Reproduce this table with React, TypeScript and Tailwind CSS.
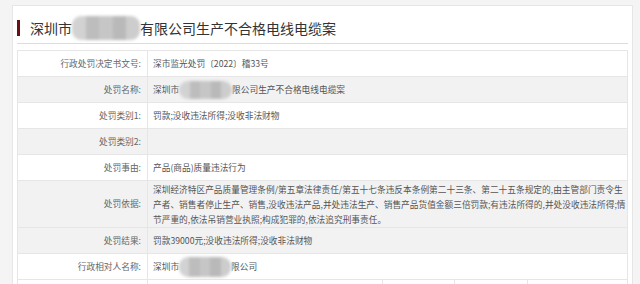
import React from "react";

function Blur({ w, h }: { w: number; h: number }) {
  return (
    <span
      className="inline-flex align-middle overflow-hidden rounded-[9px] blur-[1.5px]"
      style={{ width: w, height: h }}
    >
      <span className="flex-1 bg-[#d2d2d2]" />
      <span className="flex-1 bg-[#bdbdbd]" />
      <span className="flex-1 bg-[#c6c6c6]" />
      <span className="flex-1 bg-[#b9b9b9]" />
      <span className="flex-1 bg-[#cdcdcd]" />
    </span>
  );
}

type Row = { label: string; value: React.ReactNode; gray?: boolean; h?: string };

export default function App() {
  const rows: Row[] = [
    { label: "行政处罚决定书文号:", value: "深市监光处罚〔2022〕稽33号" },
    {
      label: "处罚名称:",
      gray: true,
      value: (
        <>
          深圳市
          <Blur w={53} h={18} />
          限公司生产不合格电线电缆案
        </>
      ),
    },
    { label: "处罚类别1:", value: "罚款;没收违法所得;没收非法财物" },
    { label: "处罚类别2:", value: "", gray: true },
    { label: "处罚事由:", value: "产品(商品)质量违法行为" },
    {
      label: "处罚依据:",
      gray: true,
      h: "h-[47px]",
      value: (
        <span className="block leading-[15px]">
          深圳经济特区产品质量管理条例/第五章法律责任/第五十七条违反本条例第二十三条、第二十五条规定的,由主管部门责令生
          <br />
          产者、销售者停止生产、销售,没收违法产品,并处违法生产、销售产品货值金额三倍罚款;有违法所得的,并处没收违法所得;情
          <br />
          节严重的,依法吊销营业执照;构成犯罪的,依法追究刑事责任。
        </span>
      ),
    },
    { label: "处罚结果:", gray: true, value: "罚款39000元;没收违法所得;没收非法财物" },
    {
      label: "行政相对人名称:",
      value: (
        <>
          深圳市
          <Blur w={52} h={20} />
          限公司
        </>
      ),
    },
  ];

  return (
    <div
      className="w-[640px] h-[284px] overflow-hidden bg-[#f4f4f4] pt-[5px] pl-[12px]"
      style={{ fontFamily: '"Noto Sans CJK SC", "Noto Sans", sans-serif' }}
    >
      <div className="w-[621px] h-[300px] bg-white border border-[#e6e6e6] px-[4px]">
        <div className="pt-[14px] pb-[7px] border-b border-[#dcdcdc] flex items-center h-[38px]">
          <div className="w-[3px] h-[16px] bg-[#6b1010]" />
          <div className="ml-[10px] h-[16px] text-[14px] leading-[16px] text-[#333] whitespace-nowrap flex items-center">
            深圳市
            <Blur w={68} h={24} />
            有限公司生产不合格电线电缆案
          </div>
        </div>

        <div className="mt-[6px] border-t border-l border-[#e6e6e6] text-[8.7px] text-[#555]">
          {rows.map((r) => (
            <div
              key={r.label}
              className={`flex border-b border-[#e6e6e6] ${r.h ?? "h-[26px]"} ${r.gray ? "bg-[#f2f2f2]" : "bg-white"}`}
            >
              <div className="w-[130px] shrink-0 border-r border-[#e6e6e6] flex items-center justify-end pr-[6px] text-[#666] whitespace-nowrap">
                {r.label}
              </div>
              <div className="flex-1 border-r border-[#e6e6e6] flex items-center pl-[5px] whitespace-nowrap">
                {r.value}
              </div>
            </div>
          ))}
          <div className="flex h-[26px] border-b border-[#e6e6e6] bg-white">
            <div className="w-[130px] border-r border-[#e6e6e6]" />
            <div className="w-[235px] border-r border-[#e6e6e6]" />
            <div className="w-[72px] border-r border-[#e6e6e6]" />
            <div className="w-[73px] border-r border-[#e6e6e6]" />
            <div className="flex-1 border-r border-[#e6e6e6]" />
          </div>
        </div>
      </div>
    </div>
  );
}
